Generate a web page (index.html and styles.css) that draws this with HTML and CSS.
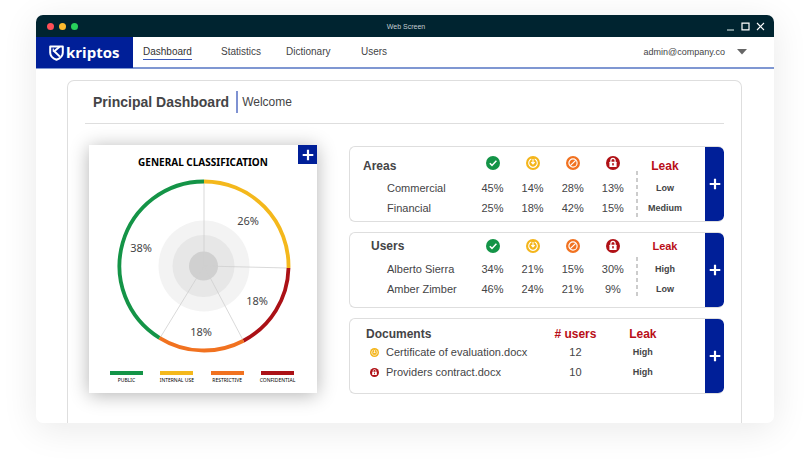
FILE: index.html
```html
<!DOCTYPE html>
<html lang="en">
<head>
<meta charset="utf-8">
<meta name="viewport" content="width=device-width, initial-scale=1">
<title>Kriptos Dashboard</title>
<link rel="stylesheet" href="styles.css">
</head>
<body>
<svg class="defs" aria-hidden="true">
  <symbol id="public" viewBox="0 0 14 14"><circle cx="7" cy="7" r="7" fill="#149447"/><path d="M3.8 7.2 6 9.4l4.4-4.6" fill="none" stroke="#fff" stroke-width="1.5"/></symbol>
  <symbol id="internal" viewBox="0 0 14 14"><circle cx="7" cy="7" r="7" fill="#f4b51b"/><path d="M5.3 3.1A4.3 4.3 0 1 0 8.7 3.1M7 3v4.600M5.300 6.200 7 7.900l1.700-1.700" fill="none" stroke="#fff" stroke-width="1.1"/></symbol>
  <symbol id="restrictive" viewBox="0 0 14 14"><circle cx="7" cy="7" r="7" fill="#f17220"/><circle cx="7" cy="7" r="4.1" fill="none" stroke="#fff" stroke-width="1.2"/><path d="m4.300 9.700 5.400-5.400" stroke="#fff" stroke-width="1.2"/></symbol>
  <symbol id="confidential" viewBox="0 0 14 14"><circle cx="7" cy="7" r="7" fill="#b01116"/><path d="M4.900 6V4.500a2.100 2.100 0 0 1 4.200 0V6" fill="none" stroke="#fff" stroke-width="1.2"/><rect x="3.400" y="5.700" width="7.200" height="5.300" rx=".6" fill="#fff"/><circle cx="7" cy="8" r=".9" fill="#b01116"/><path d="M7 8v1.800" stroke="#b01116" stroke-width=".8"/></symbol>
  <symbol id="plus" viewBox="0 0 12 12"><path d="M6 .7v10.600M.7 6h10.600" stroke="#fff" stroke-width="2.200"/></symbol>
</svg>

<div class="window">
  <div class="titlebar">
    <div class="lights"><span class="light red"></span><span class="light amber"></span><span class="light green"></span></div>
    <span class="window-title">Web Screen</span>
    <div class="controls">
      <button type="button" aria-label="Minimize"><svg width="9" height="9" viewBox="0 0 9 9"><path d="M1 8h7" stroke="#8fa5a9" stroke-width="1.6"/></svg></button>
      <button type="button" aria-label="Maximize"><svg width="9" height="9" viewBox="0 0 9 9"><path d="M1 1.200h7v6.600H1z" fill="none" stroke="#fff" stroke-width="1.2"/></svg></button>
      <button type="button" aria-label="Close"><svg width="9" height="9" viewBox="0 0 9 9"><path d="m1 1 7 7M8 1 1 8" stroke="#fff" stroke-width="1.1"/></svg></button>
    </div>
  </div>

  <header class="topbar">
    <a class="logo" href="#">
      <svg width="15" height="16" viewBox="0 0 15 16"><path d="M1.200 1.500h12.600v6.200c0 3.400-2.600 5.600-6.300 7.100C3.800 13.300 1.200 11.100 1.200 7.700z" fill="none" stroke="#fff" stroke-width="2" stroke-linejoin="round"/><path d="M10.600 1.800 5.300 6.200l5.600 5.400" fill="none" stroke="#fff" stroke-width="2"/><path d="M4.300 3.600v3" stroke="#fff" stroke-width="1.2"/></svg>
      <span>kriptos</span>
    </a>
    <nav>
      <a class="active" href="#">Dashboard</a>
      <a href="#">Statistics</a>
      <a href="#">Dictionary</a>
      <a href="#">Users</a>
    </nav>
    <button type="button" class="account">admin@company.co
      <svg width="10" height="6" viewBox="0 0 10 6"><path d="M0 0h10L5 5.500z" fill="#666"/></svg>
    </button>
  </header>

  <main class="panel">
    <div class="heading"><h1>Principal Dashboard</h1><span class="welcome">Welcome</span></div>
    <div class="content">
      <section class="chart-card">
        <button type="button" class="expand" aria-label="Expand chart"><svg width="12" height="12"><use href="#plus"/></svg></button>
        <h2>GENERAL CLASSIFICATION</h2>
        <svg class="chart" viewBox="0 0 228 180" role="img" aria-label="General classification chart">
          <g transform="translate(115 90)">
            <circle r="45.500" fill="#f3f3f3"/>
            <circle cx="-.5" r="31" fill="#e7e7e7"/>
            <circle cx="-.5" r="14.500" fill="#d0d0d0"/>
            <path d="M0-84V0L84 2M0 0 39 74M0 0-44 72" fill="none" stroke="#cfcfcf" stroke-width=".8"/>
            <g fill="none" stroke-width="3.800">
              <path d="M0-84.500A84.500 84.500 0 0 1 84.500 2" stroke="#f4b81c"/>
              <path d="M84.500 2A84.500 84.500 0 0 1 39.500 74.700" stroke="#ab1116"/>
              <path d="M39.500 74.700A84.500 84.500 0 0 1-44.600 71.800" stroke="#f17220"/>
              <path d="M-44.600 71.800A84.500 84.500 0 0 1 0-84.500" stroke="#149447"/>
            </g>
            <g class="values">
              <text x="44" y="-41">26%</text>
              <text x="53" y="39">18%</text>
              <text x="-3" y="70">18%</text>
              <text x="-63" y="-14">38%</text>
            </g>
          </g>
        </svg>
        <ul class="legend">
          <li class="l-public">PUBLIC</li>
          <li class="l-internal">INTERNAL USE</li>
          <li class="l-restrictive">RESTRICTIVE</li>
          <li class="l-confidential">CONFIDENTIAL</li>
        </ul>
      </section>

      <div class="cards">
        <section class="card">
          <table class="levels areas">
            <colgroup><col class="name"><col class="level"><col class="level"><col class="level"><col class="level"><col></colgroup>
            <thead><tr><th scope="col">Areas</th>
              <th scope="col"><svg role="img" aria-label="Public"><use href="#public"/></svg></th>
              <th scope="col"><svg role="img" aria-label="Internal use"><use href="#internal"/></svg></th>
              <th scope="col"><svg role="img" aria-label="Restrictive"><use href="#restrictive"/></svg></th>
              <th scope="col"><svg role="img" aria-label="Confidential"><use href="#confidential"/></svg></th>
              <th scope="col" class="leak">Leak</th></tr></thead>
            <tbody>
              <tr><td>Commercial</td><td>45%</td><td>14%</td><td>28%</td><td>13%</td><td class="risk">Low</td></tr>
              <tr><td>Financial</td><td>25%</td><td>18%</td><td>42%</td><td>15%</td><td class="risk">Medium</td></tr>
            </tbody>
          </table>
          <button type="button" class="more" aria-label="More areas"><svg width="12" height="12"><use href="#plus"/></svg></button>
        </section>

        <section class="card">
          <table class="levels people">
            <colgroup><col class="name"><col class="level"><col class="level"><col class="level"><col class="level"><col></colgroup>
            <thead><tr><th scope="col">Users</th>
              <th scope="col"><svg role="img" aria-label="Public"><use href="#public"/></svg></th>
              <th scope="col"><svg role="img" aria-label="Internal use"><use href="#internal"/></svg></th>
              <th scope="col"><svg role="img" aria-label="Restrictive"><use href="#restrictive"/></svg></th>
              <th scope="col"><svg role="img" aria-label="Confidential"><use href="#confidential"/></svg></th>
              <th scope="col" class="leak">Leak</th></tr></thead>
            <tbody>
              <tr><td>Alberto Sierra</td><td>34%</td><td>21%</td><td>15%</td><td>30%</td><td class="risk">High</td></tr>
              <tr><td>Amber Zimber</td><td>46%</td><td>24%</td><td>21%</td><td>9%</td><td class="risk">Low</td></tr>
            </tbody>
          </table>
          <button type="button" class="more" aria-label="More users"><svg width="12" height="12"><use href="#plus"/></svg></button>
        </section>

        <section class="card">
          <table class="documents">
            <colgroup><col class="doc"><col class="count"><col class="doc-leak"><col></colgroup>
            <thead><tr><th scope="col">Documents</th><th scope="col"># users</th><th scope="col">Leak</th><td></td></tr></thead>
            <tbody>
              <tr><td><span class="file"><svg role="img" aria-label="Internal use"><use href="#internal"/></svg>Certificate of evaluation.docx</span></td><td>12</td><td class="risk">High</td><td></td></tr>
              <tr><td><span class="file"><svg role="img" aria-label="Confidential"><use href="#confidential"/></svg>Providers contract.docx</span></td><td>10</td><td class="risk">High</td><td></td></tr>
            </tbody>
          </table>
          <button type="button" class="more" aria-label="More documents"><svg width="12" height="12"><use href="#plus"/></svg></button>
        </section>
      </div>
    </div>
  </main>
</div>
</body>
</html>
```
FILE: styles.css
```css
:root {
  --navy: #001f98;
  --ink: #444446;
  --red: #b90e18;
  --line: #dedede;
}

* { box-sizing: border-box; }

body {
  margin: 0;
  padding: 15px 36px 38px;
  background: #fff;
  color: var(--ink);
  font-family: "Liberation Sans", Arial, sans-serif;
  font-size: 11px;
}

.defs { position: absolute; width: 0; height: 0; }
svg { display: block; }
h1, h2 { margin: 0; }
a { color: inherit; text-decoration: none; }

button {
  border: 0;
  padding: 0;
  background: none;
  color: inherit;
  font: inherit;
  cursor: pointer;
}

.window {
  position: relative;
  border-radius: 7px;
  background: #fff;
  box-shadow: 0 6px 36px rgba(0, 0, 0, 0.09);
}

/* Lower edge of the panel showing under the window */
.window::after {
  content: "";
  position: absolute;
  top: 100%;
  left: 31px;
  right: 32px;
  height: 5px;
  border-radius: 0 0 6px 6px;
  background: #f3f3f3;
}

.titlebar {
  display: grid;
  grid-template-columns: 1fr auto 1fr;
  align-items: center;
  height: 22px;
  padding: 0 9px 0 11px;
  border-radius: 7px 7px 0 0;
  background: #002430;
}

.lights { display: flex; gap: 5px; }
.light { width: 7px; height: 7px; border-radius: 50%; }
.red { background: #ff4f57; }
.amber { background: #fdbc2e; }
.green { background: #28d15b; }
.window-title { color: #c3cdd0; font-size: 7px; }
.controls { display: flex; justify-content: flex-end; gap: 6px; }

.topbar {
  display: flex;
  height: 32px;
  border-bottom: 2px solid #7f97d2;
}

.logo {
  display: flex;
  align-items: center;
  gap: 2px;
  width: 97px;
  height: 31px;
  padding-left: 13px;
  background: var(--navy);
  color: #fff;
  font: 700 15px/20px "Open Sans", sans-serif;
}

.logo span { padding-bottom: 2px; }

nav {
  display: grid;
  grid-template-columns: 78px 65px 75px auto;
  align-items: center;
  justify-items: start;
  padding-left: 10px;
  font-size: 10px;
}

nav a { padding: 1px 0; line-height: 12px; border-bottom: 1px solid transparent; }
nav .active { border-color: #3a59b9; color: #333; }

.account {
  display: flex;
  align-items: center;
  gap: 12px;
  margin-left: auto;
  padding-right: 27px;
  font-size: 9px;
}

.panel {
  margin: 11px 32px 0 31px;
  padding: 0 17px 29px;
  border: 1px solid var(--line);
  border-bottom: 0;
  border-radius: 7px 7px 0 0;
}

.heading {
  display: flex;
  align-items: center;
  height: 43px;
  padding-left: 8px;
  border-bottom: 1px solid var(--line);
}

h1 { font-size: 14px; line-height: 22px; }

.welcome {
  margin-left: 7px;
  padding-left: 4px;
  border-left: 2px solid #7f92d2;
  font-size: 12px;
  line-height: 22px;
}

.content {
  display: grid;
  grid-template-columns: 228fr 375fr;
  gap: 32px;
  padding: 21px 0 0 4px;
}

.chart-card {
  position: relative;
  display: flex;
  flex-direction: column;
  height: 248px;
  padding-top: 9px;
  background: #fff;
  box-shadow: 0 2px 18px rgba(0, 0, 0, 0.3);
  font-family: "Noto Sans", sans-serif;
}

.expand {
  position: absolute;
  top: 0;
  right: 0;
  display: grid;
  place-items: center;
  width: 19px;
  height: 19px;
  background: var(--navy);
}

h2 { color: #000; font-size: 10px; line-height: 16px; text-align: center; }
.chart { width: 100%; margin-top: 6px; }
.values { fill: var(--ink); font-size: 11px; text-anchor: middle; }

.legend {
  display: grid;
  grid-template-columns: repeat(4, 33px);
  justify-content: space-between;
  margin: 15px 23px 0 21px;
  padding: 0;
  list-style: none;
  color: #000;
  font-size: 5px;
  line-height: 11px;
}

.legend li {
  display: flex;
  justify-content: center;
  border-top: 4px solid;
  white-space: nowrap;
}

.legend .l-public { border-top-color: #149447; }
.legend .l-internal { border-top-color: #f4b81c; }
.legend .l-restrictive { border-top-color: #f17220; }
.legend .l-confidential { border-top-color: #ab1116; }

.cards { display: flex; flex-direction: column; gap: 10px; padding-top: 1px; }

.card {
  display: flex;
  height: 76px;
  border: 1px solid var(--line);
  border-right: 0;
  border-radius: 6px;
  overflow: hidden;
}

.more {
  display: grid;
  place-items: center;
  flex: none;
  width: 19px;
  margin: -1px 0;
  border-radius: 0 6px 6px 0;
  background: var(--navy);
}

table {
  flex: 1;
  width: 100%;
  table-layout: fixed;
  border-collapse: collapse;
  align-self: flex-start;
}

th, td { padding: 0; height: 20px; text-align: center; white-space: nowrap; }
th:first-child, td:first-child { text-align: left; }
th { height: 31px; font-size: 12px; }
th svg { width: 14px; height: 14px; margin: 0 auto; }
.risk { font-size: 9px; font-weight: bold; }
.leak, .documents th + th { color: var(--red); }
td:first-child { padding-left: 37px; }

.name { width: 34.5%; }
.level { width: 11.3%; }
.levels td:last-child, .levels th:last-child { padding-right: 8px; }

.levels {
  background: repeating-linear-gradient(#ccc 0 4px, transparent 4px 7px) 81% 24px / 2px 46px no-repeat;
}

.areas th:first-child { padding: 6px 0 0 13px; }
.areas .leak { padding-top: 6px; }
.people th { height: 26px; }
.people th:first-child { padding-left: 21px; }
.people .leak { font-size: 11px; }

.doc { width: 54%; }
.count { width: 19%; }
.doc-leak { width: 19%; }
.documents th { height: 23px; padding-top: 7px; }
.documents th:first-child { padding-left: 16px; }
.documents td:first-child { padding-left: 20px; }
.file { display: flex; align-items: center; gap: 7px; }
.file svg { width: 9px; height: 9px; }
```
